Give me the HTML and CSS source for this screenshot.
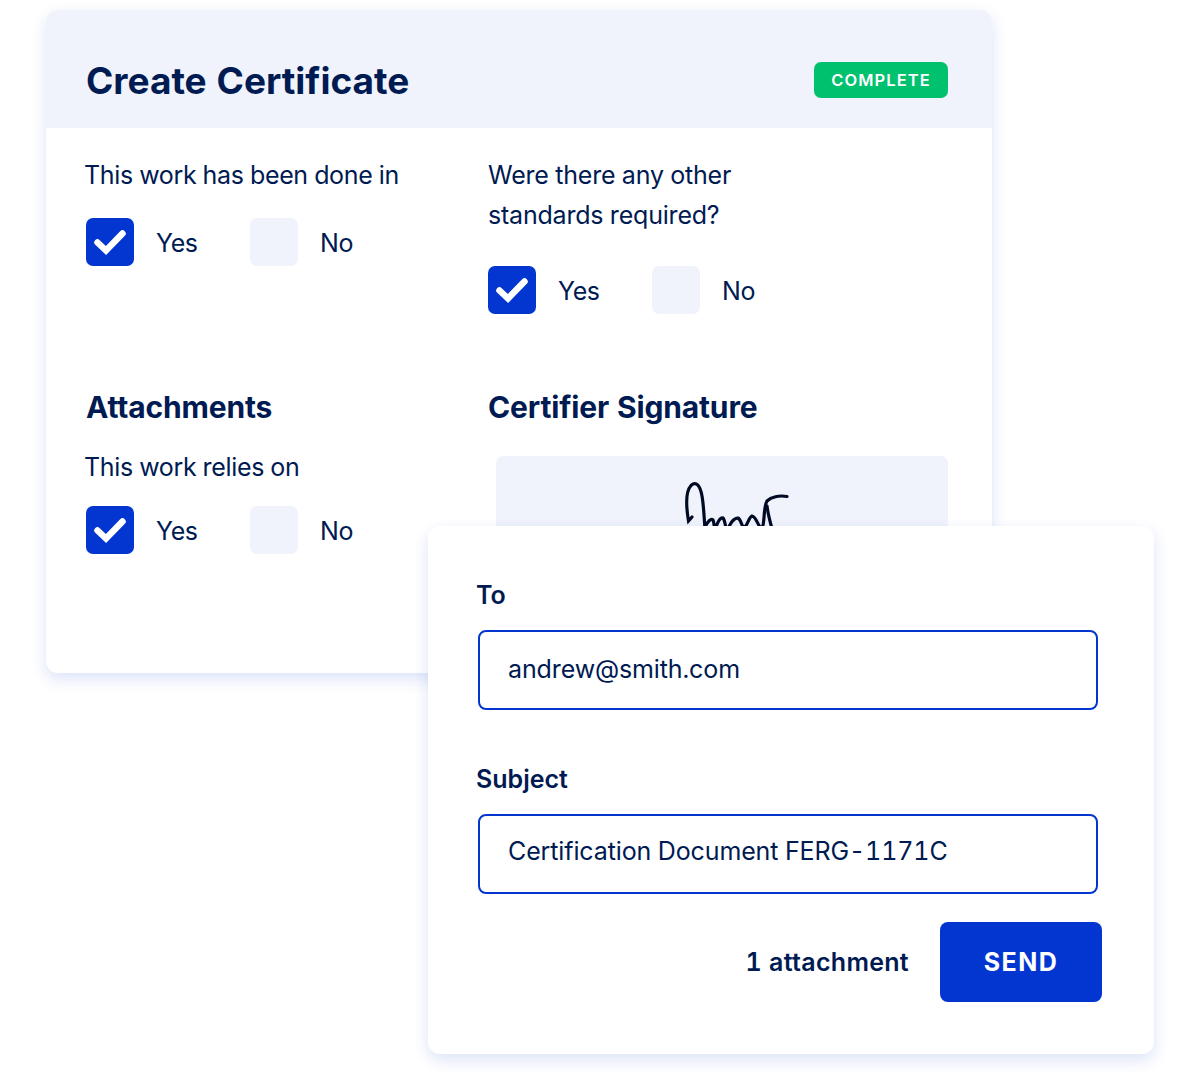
FILE: index.html
```html
<!DOCTYPE html>
<html>
<head>
<meta name="viewport" content="width=device-width, initial-scale=1">
<link rel="stylesheet" href="styles.css">
</head>
<body>

<div class="stage">

  <div class="card card-back">
    <div class="card-head">
      <h1>Create Certificate</h1>
      <span class="badge">COMPLETE</span>
    </div>
    <div class="card-body">
      <div class="cell">
        <p class="question">This work has been done in</p>
        <div class="options">
          <div class="option">
            <span class="box box-on"><svg viewBox="0 0 48 48"><path d="M11.500 24.500L20 32.500L36.500 15.500"/></svg></span>
            <span class="option-text">Yes</span>
          </div>
          <div class="option">
            <span class="box"></span>
            <span class="option-text">No</span>
          </div>
        </div>
      </div>
      <div class="cell">
        <p class="question question-two">Were there any other<br>standards required?</p>
        <div class="options">
          <div class="option">
            <span class="box box-on"><svg viewBox="0 0 48 48"><path d="M11.500 24.500L20 32.500L36.500 15.500"/></svg></span>
            <span class="option-text">Yes</span>
          </div>
          <div class="option">
            <span class="box"></span>
            <span class="option-text">No</span>
          </div>
        </div>
      </div>
      <div class="cell">
        <h2>Attachments</h2>
        <p class="question question-sub">This work relies on</p>
        <div class="options">
          <div class="option">
            <span class="box box-on"><svg viewBox="0 0 48 48"><path d="M11.500 24.500L20 32.500L36.500 15.500"/></svg></span>
            <span class="option-text">Yes</span>
          </div>
          <div class="option">
            <span class="box"></span>
            <span class="option-text">No</span>
          </div>
        </div>
      </div>
      <div class="cell">
        <h2>Certifier Signature</h2>
        <div class="signature">
          <svg viewBox="496 456 452 100">
            <path d="M692 517L688.500 521C686 506 686 491 691 485.500C696 481 700 485 702 496C704 507 704 520 706 540"/>
            <path d="M705 527C708 521 711 518 713 520C714 522 714 526 715 530C717 523 720 517 723 518C725 520 725 526 727 531C730 524 733 518 738 518C742 520 741 528 745 527C748 524 749 517 752 516C757 517 758 528 762 528C765 524 763 508 767 501C771 497 779 495 787 496.500"/>
            <path d="M767 506C768 514 770 522 773 532"/>
          </svg>
        </div>
      </div>
    </div>
  </div>

  <div class="card card-front">
    <label class="field-label">To</label>
    <div class="field">andrew@smith.com</div>
    <label class="field-label field-label-next">Subject</label>
    <div class="field field-subject">Certification Document FERG-1171C</div>
    <div class="send-row">
      <span class="attach">1 attachment</span>
      <button class="send">SEND</button>
    </div>
  </div>

</div>

</body>
</html>
```

FILE: styles.css
```css
* {
  box-sizing: border-box;
}

body {
  margin: 0;
  background-color: white;
  font-family: Inter, "Liberation Sans", sans-serif;
  font-variant-numeric: tabular-nums;
  color: #001a52;
}

.stage {
  position: relative;
  width: 1200px;
  height: 1076px;
  overflow: hidden;
}

.card {
  position: absolute;
  background-color: white;
  border-radius: 12px;
  box-shadow: 0 6px 16px rgba(3, 54, 208, 0.14);
}

.card-back {
  left: 46px;
  top: 10px;
  width: 946px;
  height: 663px;
  overflow: hidden;
}

.card-front {
  left: 428px;
  top: 526px;
  width: 726px;
  height: 528px;
  padding: 49px 56px 0 50px;
}

.card-head {
  display: flex;
  align-items: center;
  justify-content: space-between;
  height: 118px;
  padding: 22px 44px 0 40px;
  background-color: #f0f3fb;
}

h1 {
  margin: 0;
  font-size: 37px;
  font-weight: 700;
}

.badge {
  width: 134px;
  height: 36px;
  border-radius: 7px;
  background-color: #00c16e;
  color: white;
  font-size: 16.5px;
  font-weight: 600;
  letter-spacing: 1.1px;
  line-height: 36px;
  text-align: center;
}

.card-body {
  display: grid;
  grid-template-columns: 402px 1fr;
  row-gap: 73px;
  padding: 27px 44px 0 40px;
}

.question {
  margin: 0 0 23px -2px;
  font-size: 25px;
  letter-spacing: -0.35px;
  line-height: 40px;
}

.question-two {
  margin: 0 0 31px 0;
  letter-spacing: -0.2px;
}

.question-sub {
  margin-top: 20px;
  margin-bottom: 19px;
}

.options {
  display: flex;
}

.option {
  display: flex;
  align-items: center;
  gap: 22px;
  width: 164px;
  font-size: 25px;
  letter-spacing: -0.4px;
}

.option-text {
  padding-top: 2px;
}

.box {
  width: 48px;
  height: 48px;
  border-radius: 7px;
  background-color: #f0f3fb;
}

.box-on {
  background-color: #0336d0;
}

.box svg {
  display: block;
  width: 48px;
  height: 48px;
  fill: none;
  stroke: white;
  stroke-width: 6.5;
  stroke-linecap: round;
}

h2 {
  margin: 0;
  font-size: 30px;
  font-weight: 700;
  letter-spacing: -0.15px;
  line-height: 40px;
}

.signature {
  width: 452px;
  height: 100px;
  margin: 29px 0 0 8px;
  border-radius: 7px;
  background-color: #f0f3fb;
}

.signature svg {
  display: block;
  width: 452px;
  height: 100px;
  fill: none;
  stroke: #000a24;
  stroke-width: 3.2;
  stroke-linecap: round;
}

.field-label {
  display: block;
  margin: 0 0 15px -2px;
  font-size: 25px;
  font-weight: 600;
  line-height: 40px;
}

.field-label-next {
  margin-top: 49px;
}

.field {
  width: 620px;
  height: 80px;
  padding-left: 28px;
  border: 2px solid #0336d0;
  border-radius: 8px;
  font-size: 25px;
  letter-spacing: -0.12px;
  line-height: 74px;
}

.field-subject {
  line-height: 70px;
}

.send-row {
  display: flex;
  align-items: center;
  justify-content: flex-end;
  gap: 31px;
  margin: 28px -4px 0 0;
}

.attach {
  font-size: 25px;
  font-weight: 600;
  letter-spacing: 0.3px;
}

.send {
  width: 162px;
  height: 80px;
  border: none;
  border-radius: 8px;
  background-color: #0336d0;
  color: white;
  font-family: inherit;
  font-size: 25px;
  font-weight: 700;
  letter-spacing: 1.5px;
}
```
